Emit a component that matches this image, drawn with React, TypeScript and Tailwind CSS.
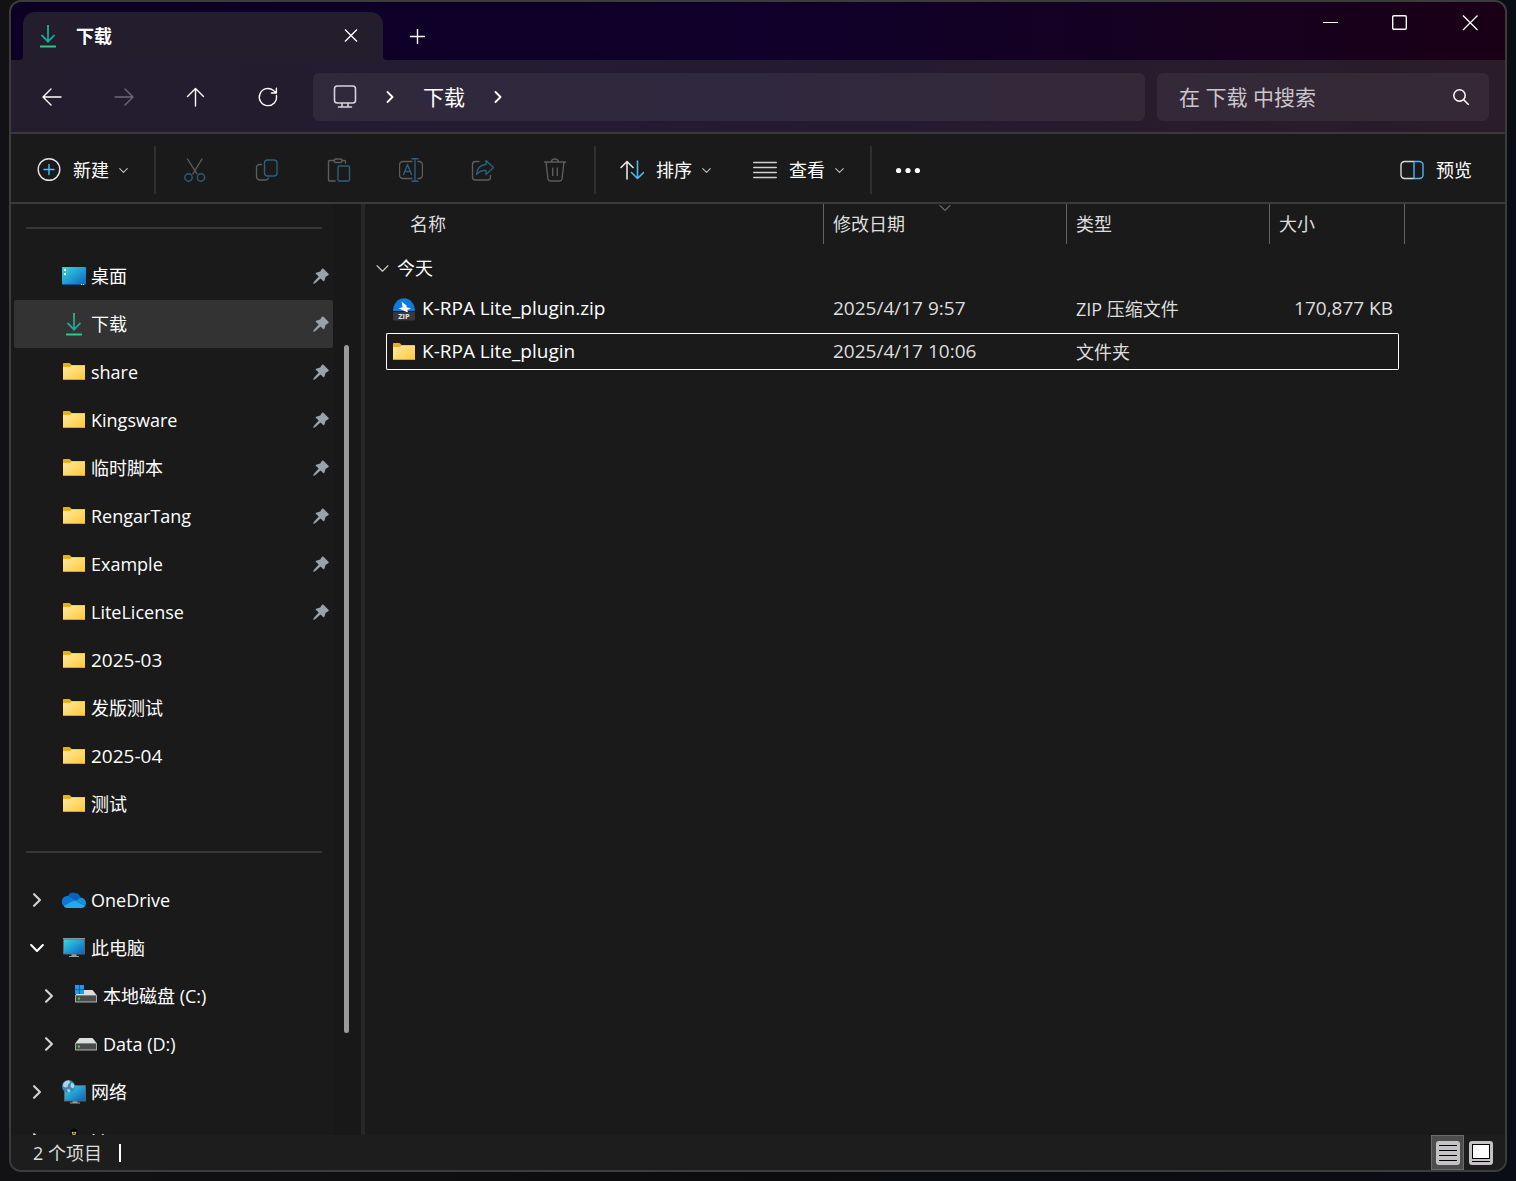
import type { ReactNode } from 'react';

type IconProps = { className?: string };

function DownloadIcon({ className }: IconProps) {
  return (
    <svg className={className} width="24" height="24" viewBox="0 0 24 24" fill="none">
      <defs>
        <linearGradient id="dl" x1="0" y1="0" x2="0.4" y2="1">
          <stop offset="0" stopColor="#2fcf8a" />
          <stop offset="1" stopColor="#14a8a0" />
        </linearGradient>
      </defs>
      <path d="M11.2 1h1.6v14.6l5-5.2 1.3 1.2L12 19l-7.1-7.4 1.3-1.2 5 5.2z" fill="url(#dl)" />
      <rect x="4" y="21.6" width="16" height="1.8" rx="0.4" fill="#2cc98c" />
    </svg>
  );
}

function FolderIcon() {
  return (
    <svg width="24" height="24" viewBox="0 0 24 24">
      <defs>
        <linearGradient id="folder" x1="0" y1="0" x2="1" y2="1">
          <stop offset="0" stopColor="#ffe9a4" />
          <stop offset="1" stopColor="#ffc937" />
        </linearGradient>
      </defs>
      <path d="M1 3.6Q1 3 1.7 3h5.6q.5 0 .9.4L9.6 5H22.3q.7 0 .7.7V8H1z" fill="#f8ab12" />
      <path d="M1 7h6.5q.5 0 .9-.4L9.6 5.6H23V20H1z" fill="url(#folder)" />
      <path d="M1 19h22v.4q0 .6-.7.6H1.700q-.7 0-.7-.6z" fill="#e5a11a" />
    </svg>
  );
}

function DesktopIcon() {
  return (
    <svg width="24" height="24" viewBox="0 0 24 24">
      <defs>
        <linearGradient id="desk" x1="0" y1="0" x2="1" y2="1">
          <stop offset="0" stopColor="#35d8e6" />
          <stop offset="1" stopColor="#0d63bd" />
        </linearGradient>
      </defs>
      <rect y="3" width="24" height="18" rx="0.8" fill="url(#desk)" />
      <path d="M2 5h2v2H2zM2 9h2v2H2z" fill="#fff" />
      <path d="M0 20h24v1H0z" fill="#0b5597" />
      <path d="M19 20h1v1h-1zM21 20h1v1h-1z" fill="#cfe6f5" />
    </svg>
  );
}

function PcIcon() {
  return (
    <svg width="24" height="24" viewBox="0 0 24 24">
      <path d="M9.500 18h5v2h2.500v1H7v-1h2.500z" fill="#93a0a8" />
      <rect x="1" y="2" width="22" height="16.500" rx="0.8" fill="#59666e" />
      <rect x="1" y="2" width="22" height="1" fill="#8d979d" />
      <rect x="2" y="3.500" width="20" height="14" fill="url(#desk)" />
    </svg>
  );
}

function NetworkIcon() {
  return (
    <svg width="24" height="24" viewBox="0 0 24 24">
      <path d="M10.500 21h5v1.500h2.500v1H8v-1h2.500z" fill="#93a0a8" />
      <rect x="2" y="5" width="22" height="16.500" rx="0.8" fill="#59666e" />
      <rect x="3" y="6" width="20" height="14.500" fill="url(#desk)" />
      <circle cx="6.500" cy="6.500" r="6.500" fill="#3f87b5" />
      <path d="M1.500 3Q4 .2 7 .6L8.200 2.600 6 4.500 5.600 7 3 7.500 1 6zM9 3l2.500.4L12.600 6 11 8.500 8.500 7zM5 9l3 .6L8.500 12 6 12.600z" fill="#a9d5ea" />
    </svg>
  );
}

function DriveIcon({ system }: { system?: boolean }) {
  return (
    <svg width="24" height="24" viewBox="0 0 24 24">
      <path d="M5.500 6h13L23 11.500H1z" fill="#dcdee0" />
      <rect x="1" y="11" width="22" height="7.500" rx="0.6" fill="#a7a9ab" />
      <rect x="2" y="11.600" width="20" height="5.800" fill="#4a4b4d" />
      <rect x="4" y="13.500" width="2" height="2" fill="#2fe02f" />
      {system && (
        <>
          <path d="M1 1h9v9H1z" fill="#123a56" />
          <path d="M1 1h4.200v4.200H1zM5.800 1H10v4.200H5.800zM1 5.800h4.200V10H1zM5.800 5.800H10V10H5.800z" fill="#1c9bea" />
        </>
      )}
    </svg>
  );
}

function OneDriveIcon() {
  return (
    <svg width="24" height="24" viewBox="0 0 24 24">
      <path d="M5.500 9A7 7 0 0 1 18.800 10L12 14z" fill="#0a5fb8" />
      <path d="M0 14.500A5.500 5.500 0 0 1 8.600 9l7 5L3 19a4.600 4.600 0 0 1-3-4.500z" fill="#0c78d4" />
      <path d="M13.500 13l4.300-3A5 5 0 0 1 24 15q0 1.500-.8 2.700z" fill="#1490df" />
      <path d="M1.600 18l9-4.800q2-.8 4 .2l8.700 4.300Q22 20 19.500 20H5q-2.200 0-3.400-2z" fill="#28a8ea" />
    </svg>
  );
}

function LinuxIcon() {
  return (
    <svg width="24" height="24" viewBox="0 0 24 24">
      <path d="M8.500 5Q8.500.5 12 .5t3.500 4.500q0 3 2.500 6.500 2 4 0 8l-12 0q-2-4 0-8 2.500-3.500 2.500-6.500z" fill="#050505" />
      <circle cx="10.700" cy="4.800" r="1" fill="#ccc" />
      <circle cx="13.300" cy="4.800" r="1" fill="#ccc" />
      <path d="M9.500 7L12 5.500 14.500 7 12 9z" fill="#e2a416" />
    </svg>
  );
}

function ZipIcon() {
  return (
    <svg width="24" height="24" viewBox="0 0 24 24">
      <path d="M1 14A11 12.800 0 0 1 23 14z" fill="#0c7bdc" />
      <path d="M9.500 4.500l5.200 4.300-.2 1.500 4.500 1.200-3.800 1.500 1 2.700L6.500 11.300l4.200-1z" fill="#fff" />
      <rect x="1" y="15" width="22" height="8.500" rx="1" fill="#38383b" />
      <text x="12" y="22" textAnchor="middle" fontSize="7.500" fontWeight="700" fill="#e4e4e4">ZIP</text>
    </svg>
  );
}

function PinIcon() {
  return (
    <svg width="16" height="16" viewBox="0 0 16 16">
      <path d="M9 .8q.7-.8 1.500 0l4.900 4.900q.8.900-.2 1.500l-2.500 1.500-1.400 4q-.4 1-1.200.3L7.500 10.400l-5.700 5-1.600.4.400-1.600L5.700 8.600 3 6.100q-.8-.9.200-1.300l4-1.400z" fill="#97a3ab" />
    </svg>
  );
}

function Chevron({ dir, size, width = 1.5, className }: IconProps & { dir: 'right' | 'down'; size: number; width?: number }) {
  return (
    <svg className={className} width={size} height={size} viewBox="0 0 12 12" fill="none" stroke="currentColor" strokeWidth={width} strokeLinecap="round" strokeLinejoin="round">
      <path d={dir === 'right' ? 'M3.500 1L8.500 6l-5 5' : 'M1 3.500L6 8.500l5-5'} />
    </svg>
  );
}

function Stroke({ children, className, width = 1.4 }: IconProps & { children: ReactNode; width?: number }) {
  return (
    <svg className={className} width="24" height="24" viewBox="0 0 24 24" fill="none" stroke="currentColor" strokeWidth={width} strokeLinecap="round" strokeLinejoin="round">
      {children}
    </svg>
  );
}

const BLUE = '#2a5f7c';

const COMMANDS = [
  {
    label: '剪切',
    icon: (
      <Stroke>
        <path d="M4.500 1l9.500 15M19 1L9.800 16" />
        <g stroke={BLUE}>
          <circle cx="5.500" cy="19.500" r="3.700" />
          <circle cx="18" cy="19.500" r="3.700" />
        </g>
      </Stroke>
    ),
  },
  {
    label: '复制',
    icon: (
      <Stroke>
        <path d="M6.500 6.500H4.500a3 3 0 0 0-3 3v9a3.500 3.500 0 0 0 3.500 3.500h5.500a3 3 0 0 0 3-2" />
        <rect x="9.500" y="2" width="12.500" height="16" rx="3" stroke={BLUE} />
      </Stroke>
    ),
  },
  {
    label: '粘贴',
    icon: (
      <Stroke>
        <path d="M7.500 2.500H2.500A1 1 0 0 0 1.500 3.500V22a1 1 0 0 0 1 1H8M15 2.500h2.500a1 1 0 0 1 1 1V5" />
        <rect x="7" y="1" width="8" height="3.500" rx="1.700" />
        <rect x="11" y="8" width="11.500" height="15" rx="1.300" stroke={BLUE} />
      </Stroke>
    ),
  },
  {
    label: '重命名',
    icon: (
      <Stroke>
        <path d="M13 3.500H4a3.500 3.500 0 0 0-3.500 3.500v10A3.500 3.500 0 0 0 4 20.500h9M19 3.500h1A3.500 3.500 0 0 1 23.500 7v10a3.500 3.500 0 0 1-3.500 3.500h-1" />
        <path d="M4.500 16.500l4-10 4 10M6 13.500h5M13 .7h6M13 23.300h6M16 .7v22.600" stroke={BLUE} />
      </Stroke>
    ),
  },
  {
    label: '共享',
    icon: (
      <Stroke>
        <path d="M8 3.500H4.500a3 3 0 0 0-3 3V19a3 3 0 0 0 3 3h12a3 3 0 0 0 3-3v-1.500" />
        <path d="M15 2.500l7.500 7-7.500 7v-4q-6-.5-9.500 4Q6.500 7 15 6.500z" stroke={BLUE} />
      </Stroke>
    ),
  },
  {
    label: '删除',
    icon: (
      <Stroke>
        <path d="M1.500 4h21M3 4l2 17a2.200 2.200 0 0 0 2 2h10a2.200 2.200 0 0 0 2-2l2-17M8.500 4a3.500 3 0 0 1 7 0M9.700 10v7.500M14.300 10v7.500" />
      </Stroke>
    ),
  },
];

interface NavItem {
  label: string;
  icon: ReactNode;
  arrow?: 'right' | 'down';
  child?: boolean;
  active?: boolean;
  pinned?: boolean;
}

const QUICK: NavItem[] = [
  { label: '桌面', icon: <DesktopIcon />, pinned: true },
  { label: '下载', icon: <DownloadIcon />, pinned: true, active: true },
  { label: 'share', icon: <FolderIcon />, pinned: true },
  { label: 'Kingsware', icon: <FolderIcon />, pinned: true },
  { label: '临时脚本', icon: <FolderIcon />, pinned: true },
  { label: 'RengarTang', icon: <FolderIcon />, pinned: true },
  { label: 'Example', icon: <FolderIcon />, pinned: true },
  { label: 'LiteLicense', icon: <FolderIcon />, pinned: true },
  { label: '2025-03', icon: <FolderIcon /> },
  { label: '发版测试', icon: <FolderIcon /> },
  { label: '2025-04', icon: <FolderIcon /> },
  { label: '测试', icon: <FolderIcon /> },
];

const TREE: NavItem[] = [
  { label: 'OneDrive', icon: <OneDriveIcon />, arrow: 'right' },
  { label: '此电脑', icon: <PcIcon />, arrow: 'down' },
  { label: '本地磁盘 (C:)', icon: <DriveIcon system />, arrow: 'right', child: true },
  { label: 'Data (D:)', icon: <DriveIcon />, arrow: 'right', child: true },
  { label: '网络', icon: <NetworkIcon />, arrow: 'right' },
  { label: 'Linux', icon: <LinuxIcon />, arrow: 'right' },
];

const FILES = [
  { name: 'K-RPA Lite_plugin.zip', date: '2025/4/17 9:57', type: 'ZIP 压缩文件', size: '170,877 KB', icon: <ZipIcon /> },
  { name: 'K-RPA Lite_plugin', date: '2025/4/17 10:06', type: '文件夹', size: '', icon: <FolderIcon />, focused: true },
];

function NavRow({ item }: { item: NavItem }) {
  // date-named folders use the same size as the dates in the file list
  const numeric = /^\d/.test(item.label);
  return (
    <li>
      <button
        className={`flex h-12 w-full items-center rounded-xs pr-1 text-left ${item.child ? 'pl-7' : 'pl-4'} ${
          item.active ? 'bg-[#333333]' : 'hover:bg-[#262626]'
        }`}
      >
        <span className="mr-[18px] flex w-3.5 shrink-0">
          {item.arrow && <Chevron dir={item.arrow} size={14} width={1.8} className={item.arrow === 'down' ? 'text-white' : 'text-[#d4d4d4]'} />}
        </span>
        {item.icon}
        <span className={`ml-[5px] flex-1 truncate ${numeric ? 'text-[19px]' : 'text-lg'}`}>{item.label}</span>
        {item.pinned && <PinIcon />}
      </button>
    </li>
  );
}

function Divider() {
  return (
    <li className="flex h-12 items-center pr-[11px] pl-3">
      <span className="h-0.5 w-full bg-[#373737]" />
    </li>
  );
}

function TitleBar() {
  return (
    <div className="flex h-[58px] items-end bg-linear-to-r from-[#0c0024] via-[#10002b] to-[#1a0017]">
      <div className="relative ml-3 flex h-12 w-[360px] items-center rounded-t-xl bg-[#231d2e] pr-6 pl-[13px]">
        <DownloadIcon />
        <span className="ml-4 flex-1 text-lg font-bold">下载</span>
        <button aria-label="关闭标签页">
          <svg width="16" height="16" viewBox="0 0 16 16" stroke="currentColor" strokeWidth="1.300">
            <path d="M2 1.500l12 12M14 1.500l-12 12" />
          </svg>
        </button>
        <svg className="absolute bottom-0 -left-1" width="4" height="4" viewBox="0 0 4 4">
          <path d="M4 0v4H0q4 0 4-4z" fill="#231d2e" />
        </svg>
        <svg className="absolute -right-1 bottom-0" width="4" height="4" viewBox="0 0 4 4">
          <path d="M0 0v4h4q-4 0-4-4z" fill="#231d2e" />
        </svg>
      </div>
      <button aria-label="新建标签页" className="ml-2.5 flex h-12 w-12 items-center justify-center">
        <svg width="16" height="16" viewBox="0 0 16 16" stroke="currentColor" strokeWidth="1.400">
          <path d="M8.500 1v15M1 8.500h15" />
        </svg>
      </button>
      <div className="ml-auto flex self-start">
        <button aria-label="最小化" className="flex h-[41px] w-[70px] items-center justify-center">
          <svg width="16" height="16" viewBox="0 0 16 16" stroke="currentColor">
            <path d="M1 7.500h15" />
          </svg>
        </button>
        <button aria-label="最大化" className="flex h-[41px] w-[70px] items-center justify-center">
          <svg width="16" height="16" viewBox="0 0 16 16" fill="none" stroke="currentColor" strokeWidth="1.400">
            <rect x="0.700" y="0.700" width="13.600" height="13.600" rx="1.200" />
          </svg>
        </button>
        <button aria-label="关闭" className="flex h-[41px] w-[70px] items-center justify-center">
          <svg width="16" height="16" viewBox="0 0 16 16" stroke="currentColor" strokeWidth="1.300">
            <path d="M1 .5l14.500 14.500M15.500.5L1 15" />
          </svg>
        </button>
      </div>
    </div>
  );
}

function AddressBar() {
  return (
    <div className="flex h-[74px] items-center border-b-2 border-[#3a3a3a] bg-linear-to-r from-[#231d2e] via-[#241b32] to-[#2a1c28] pt-0.5 pr-4 pl-[17px]">
      <div className="mr-[21px] flex gap-6">
        <button aria-label="后退" className="flex size-12 items-center justify-center">
          <Stroke><path d="M21 12H3.500M11 4l-8 8 8 8" /></Stroke>
        </button>
        <button aria-label="前进" className="flex size-12 items-center justify-center text-[#6d6877]">
          <Stroke><path d="M3 12h17.500M13 4l8 8-8 8" /></Stroke>
        </button>
        <button aria-label="上移" className="flex size-12 items-center justify-center">
          <Stroke><path d="M11.500 21V3.500M3.500 11.500l8-8 8 8" /></Stroke>
        </button>
        <button aria-label="刷新" className="flex size-12 items-center justify-center">
          <Stroke><path d="M20.400 10.500A8.600 8.600 0 1 1 17.500 5.500L20 7.700M20.400 3.200v4.800h-5" /></Stroke>
        </button>
      </div>
      <nav className="mr-3 flex h-12 min-w-0 flex-1 items-center gap-[27px] rounded-md bg-white/6 pl-5">
        <Stroke className="text-[#d8d2da]" width={1.6}>
          <rect x="1.500" y="1" width="21" height="17" rx="2.800" />
          <path d="M9 18.500V22M15 18.500V22M5.500 22h13" />
        </Stroke>
        <Chevron dir="right" size={12} width={1.8} />
        <a href="#downloads" className="text-[21px] leading-7">下载</a>
        <Chevron dir="right" size={12} width={1.8} />
      </nav>
      <label className="flex h-12 w-[332px] items-center rounded-md bg-white/6 pr-5 pl-[22px]">
        <input
          aria-label="搜索"
          placeholder="在 下载 中搜索"
          className="min-w-0 flex-1 bg-transparent text-[21px] leading-7 outline-none placeholder:text-[#cbc5cc]"
        />
        <svg width="16" height="16" viewBox="0 0 16 16" fill="none" stroke="currentColor" strokeWidth="1.500" strokeLinecap="round">
          <circle cx="6.500" cy="6.500" r="5.700" />
          <path d="M10.700 10.700l4.800 4.800" />
        </svg>
      </label>
    </div>
  );
}

function Separator() {
  return <span className="h-12 w-0.5 bg-[#2f2f2f]" />;
}

function Toolbar() {
  return (
    <div className="flex h-[70px] shrink-0 items-center border-b-2 border-[#3a3a3a] pt-1 pr-[33px] pl-[26px] text-lg">
      <button className="mr-[26px] flex items-center gap-3">
        <Stroke className="text-[#e4e4e4]">
          <circle cx="12" cy="11.500" r="10.800" />
          <path d="M12 6.500v10M7 11.500h10" stroke="#4cc2ff" />
        </Stroke>
        新建
        <Chevron dir="down" size={9} className="-ml-0.5 text-[#bdbdbd]" />
      </button>
      <Separator />
      <div className="mx-[3px] flex">
        {COMMANDS.map((c) => (
          <button key={c.label} aria-label={c.label} disabled className="flex h-12 w-[72px] items-center justify-center text-[#5d5d5d]">
            {c.icon}
          </button>
        ))}
      </div>
      <Separator />
      <button className="mr-[42px] ml-6 flex items-center gap-3">
        <Stroke className="text-[#e4e4e4]" width={1.6}>
          <path d="M7 21V3.500M1 9.500l6-6 6 6" />
          <path d="M17.500 3v17.500M11.500 14.500l6 6 6-6" stroke="#4cb8f5" />
        </Stroke>
        排序
        <Chevron dir="down" size={9} className="-ml-0.5 text-[#bdbdbd]" />
      </button>
      <button className="mr-[26px] flex items-center gap-3">
        <Stroke className="text-[#d0d0d0]" width={1.6}>
          <path d="M.8 4.500h22.400M.8 9.500h22.400M.8 14.500h22.400M.8 19.500h22.400" />
        </Stroke>
        查看
        <Chevron dir="down" size={9} className="-ml-0.5 text-[#bdbdbd]" />
      </button>
      <Separator />
      <button aria-label="更多" className="ml-6">
        <svg width="24" height="24" viewBox="0 0 24 24" fill="currentColor">
          <circle cx="2.600" cy="12.500" r="2.600" />
          <circle cx="12" cy="12.500" r="2.600" />
          <circle cx="21.400" cy="12.500" r="2.600" />
        </svg>
      </button>
      <button className="ml-auto flex items-center gap-3">
        <Stroke className="text-[#d8d8d8]">
          <path d="M14 3.500H4.500a3.500 3.500 0 0 0-3.500 3.500v10a3.500 3.500 0 0 0 3.500 3.500H14" />
          <path d="M14 3.500h5.500A3.500 3.500 0 0 1 23 7v10a3.500 3.500 0 0 1-3.500 3.500H14z" stroke="#4cb8f5" />
        </Stroke>
        预览
      </button>
    </div>
  );
}

function Sidebar() {
  return (
    <aside className="flex w-[350px] shrink-0 overflow-hidden pl-[3px]">
      <ul className="min-w-0 flex-1">
        <Divider />
        {QUICK.map((item) => <NavRow key={item.label} item={item} />)}
        <Divider />
        {TREE.map((item) => <NavRow key={item.label} item={item} />)}
      </ul>
      <div className="flex w-7 flex-col bg-[#181818] pt-[141px] pr-3 pb-[102px] pl-[11px]">
        <span className="flex-1 rounded-full bg-[#9a9a9a]" />
      </div>
    </aside>
  );
}

function FileList() {
  return (
    <main className="min-w-0 flex-1 overflow-hidden border-l-4 border-[#272727]">
      <table className="w-[1040px] table-fixed border-separate border-spacing-0 text-lg text-[#dedede]">
        <colgroup>
          <col className="w-[21px]" />
          <col className="w-[438px]" />
          <col className="w-[243px]" />
          <col className="w-[203px]" />
          <col className="w-[129px]" />
          <col className="w-[6px]" />
        </colgroup>
        <thead>
          <tr className="h-10 text-left">
            <th className="p-0" />
            <th className="border-r border-[#636363] p-0 pl-6 font-normal">名称</th>
            <th className="relative border-r border-[#636363] p-0 pl-[9px] font-normal">
              修改日期
              <Chevron dir="down" size={12} width={1} className="absolute -top-0.5 left-1/2 -translate-x-1/2 text-[#a0a0a0]" />
            </th>
            <th className="border-r border-[#636363] p-0 pl-[9px] font-normal">类型</th>
            <th colSpan={2} className="border-r border-[#636363] p-0 pl-[9px] font-normal">大小</th>
          </tr>
        </thead>
        <tbody>
          <tr>
            <td colSpan={6} className="p-0 pt-1 pb-0.5 pl-[11px]">
              <button className="flex h-10 items-center gap-2 text-white">
                <Chevron dir="down" size={13} width={1.1} className="text-[#c8c8c8]" />
                今天
              </button>
            </td>
          </tr>
          {FILES.map((f) => {
            const edge = f.focused ? 'border-white' : 'border-transparent';
            return (
              <tr key={f.name}>
                <td className="p-0" />
                <td className="p-0 pb-1.5">
                  <div className={`flex h-[37px] items-center gap-1.5 rounded-l-xs border-y border-l pl-[5px] text-[19px] text-white ${edge}`}>
                    {f.icon}
                    {f.name}
                  </div>
                </td>
                <td className="p-0 pb-1.5">
                  <div className={`flex h-[37px] items-center border-y pl-[9px] text-[19px] ${edge}`}>{f.date}</div>
                </td>
                <td className="p-0 pb-1.5">
                  <div className={`flex h-[37px] items-center border-y pl-[9px] ${edge}`}>{f.type}</div>
                </td>
                <td className="p-0 pb-1.5">
                  <div className={`flex h-[37px] items-center justify-end rounded-r-xs border-y border-r pr-[5px] text-[19px] ${edge}`}>{f.size}</div>
                </td>
                <td className="p-0" />
              </tr>
            );
          })}
        </tbody>
      </table>
    </main>
  );
}

function StatusBar() {
  return (
    <footer className="flex h-[35px] shrink-0 items-center bg-[#1d1d1d] pr-3 pl-[22px] text-lg text-[#dedede]">
      2 个项目
      <span className="ml-[17px] h-[18px] w-0.5 bg-white" />
      <button aria-label="详细信息" className="ml-auto flex h-[35px] w-[33px] items-center justify-center border border-[#6b6b6b] bg-[#4d4d4d]">
        <svg width="24" height="24" viewBox="0 0 24 24">
          <rect width="24" height="24" rx="3" fill="#c4c2c4" />
          <path d="M3 4.500h18M3 9.500h18M3 14.500h18M3 19.500h18" stroke="#000" />
        </svg>
      </button>
      <button aria-label="大图标" className="ml-[5px]">
        <svg width="24" height="24" viewBox="0 0 24 24">
          <rect width="24" height="24" rx="3" fill="#c4c2c4" />
          <rect x="3.500" y="3.500" width="17" height="14" fill="#fff" stroke="#000" />
          <path d="M3 20.500h18" stroke="#000" />
        </svg>
      </button>
    </footer>
  );
}

export default function App() {
  return (
    <div className="h-screen bg-linear-to-r from-[#121214] via-[#0c0c0e] to-[#0b0d14] px-[9px] pb-[9px] font-['Open_Sans','Noto_Sans_CJK_SC',sans-serif]">
      <div className="flex h-full flex-col overflow-hidden rounded-xl border-2 border-[#3c3c3c] bg-[#1a1a1a] text-white">
        <TitleBar />
        <AddressBar />
        <Toolbar />
        <div className="flex min-h-0 flex-1">
          <Sidebar />
          <FileList />
        </div>
        <StatusBar />
      </div>
    </div>
  );
}
